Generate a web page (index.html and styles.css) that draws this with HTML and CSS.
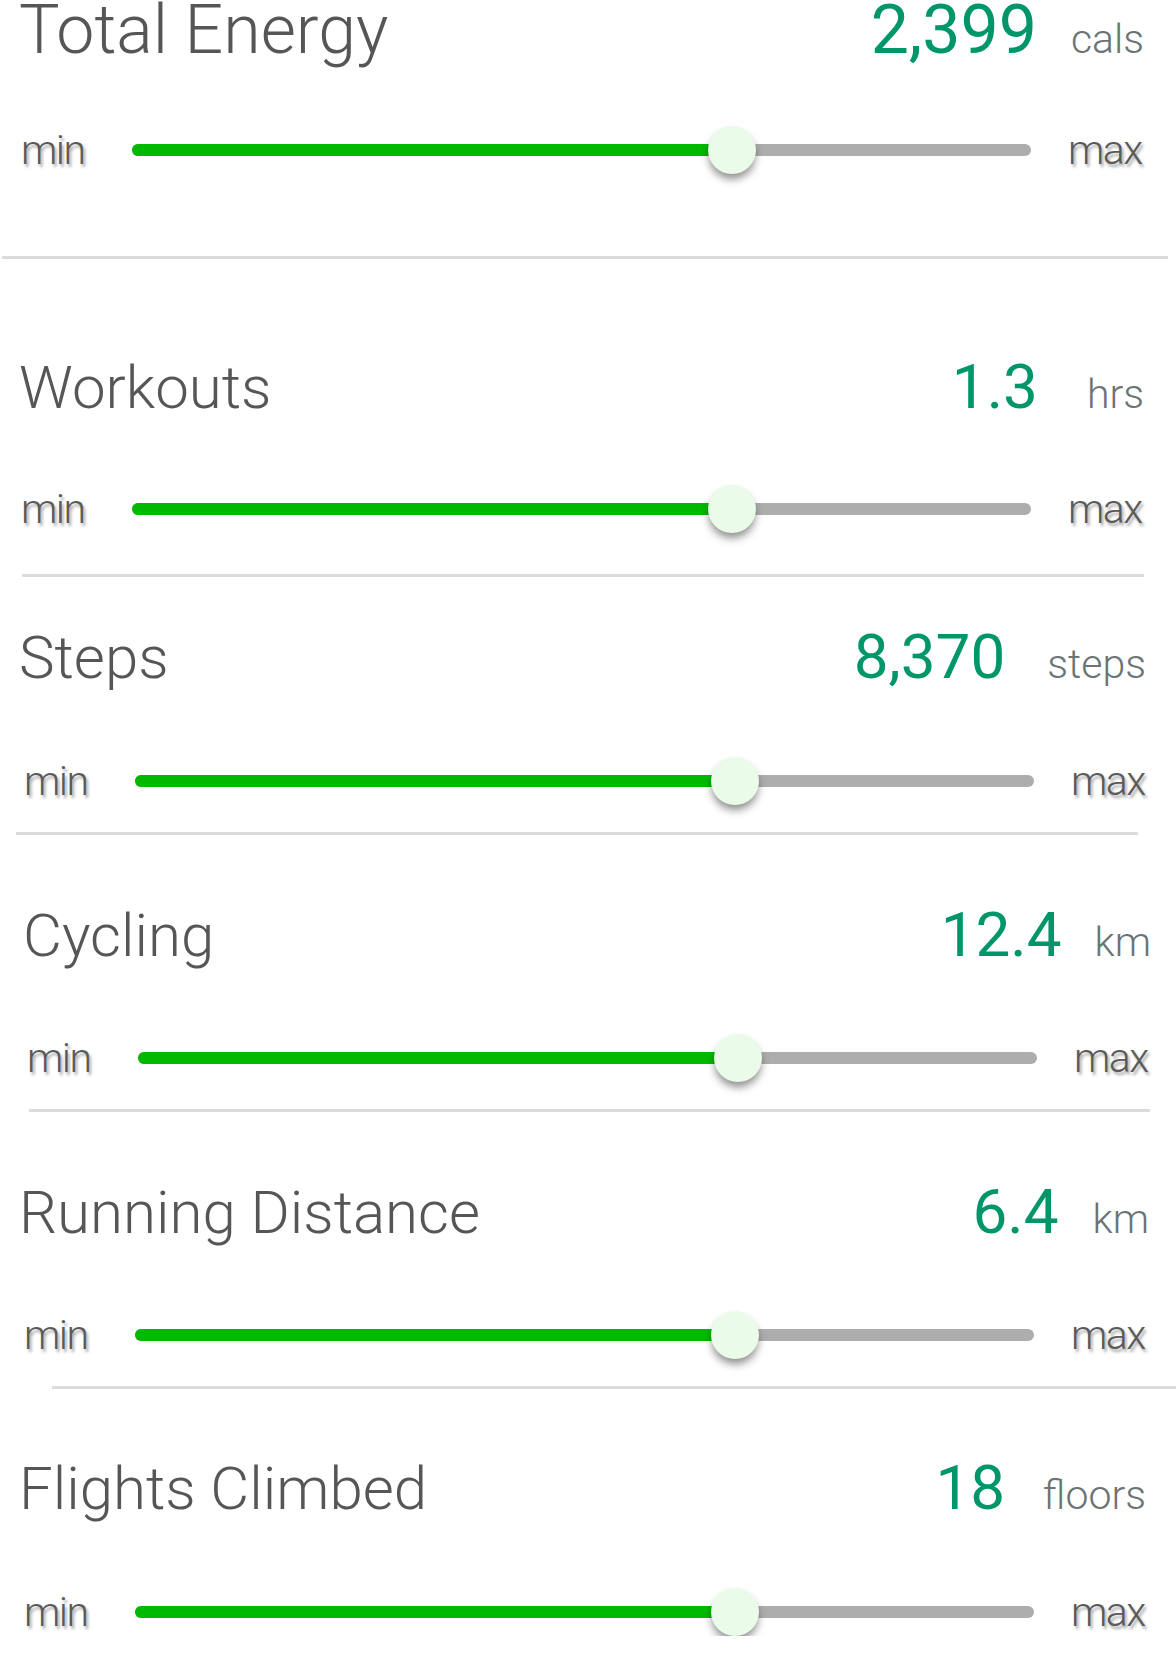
FILE: index.html
```html
<!DOCTYPE html>
<html lang="en">
<head>
<meta charset="utf-8">
<title>Activity Goals</title>
<link rel="stylesheet" href="styles.css">
</head>
<body>
<main class="goals">

  <section class="goal goal--energy">
    <div class="goal__head">
      <h2 class="goal__title">Total Energy</h2>
      <span class="goal__value">2,399</span>
      <span class="goal__unit">cals</span>
    </div>
    <div class="slider">
      <span class="slider__label">min</span>
      <div class="slider__track">
        <div class="slider__fill" style="width: 66.7%"></div>
        <div class="slider__thumb" style="left: 66.7%"></div>
      </div>
      <span class="slider__label slider__label--max">max</span>
    </div>
    <hr class="goal__rule">
  </section>

  <section class="goal goal--workouts">
    <div class="goal__head">
      <h2 class="goal__title">Workouts</h2>
      <span class="goal__value">1.3</span>
      <span class="goal__unit">hrs</span>
    </div>
    <div class="slider">
      <span class="slider__label">min</span>
      <div class="slider__track">
        <div class="slider__fill" style="width: 66.7%"></div>
        <div class="slider__thumb" style="left: 66.7%"></div>
      </div>
      <span class="slider__label slider__label--max">max</span>
    </div>
    <hr class="goal__rule">
  </section>

  <section class="goal goal--steps">
    <div class="goal__head">
      <h2 class="goal__title">Steps</h2>
      <span class="goal__value">8,370</span>
      <span class="goal__unit">steps</span>
    </div>
    <div class="slider">
      <span class="slider__label">min</span>
      <div class="slider__track">
        <div class="slider__fill" style="width: 66.7%"></div>
        <div class="slider__thumb" style="left: 66.7%"></div>
      </div>
      <span class="slider__label slider__label--max">max</span>
    </div>
    <hr class="goal__rule">
  </section>

  <section class="goal goal--cycling">
    <div class="goal__head">
      <h2 class="goal__title">Cycling</h2>
      <span class="goal__value">12.4</span>
      <span class="goal__unit">km</span>
    </div>
    <div class="slider">
      <span class="slider__label">min</span>
      <div class="slider__track">
        <div class="slider__fill" style="width: 66.7%"></div>
        <div class="slider__thumb" style="left: 66.7%"></div>
      </div>
      <span class="slider__label slider__label--max">max</span>
    </div>
    <hr class="goal__rule">
  </section>

  <section class="goal goal--running">
    <div class="goal__head">
      <h2 class="goal__title">Running Distance</h2>
      <span class="goal__value">6.4</span>
      <span class="goal__unit">km</span>
    </div>
    <div class="slider">
      <span class="slider__label">min</span>
      <div class="slider__track">
        <div class="slider__fill" style="width: 66.7%"></div>
        <div class="slider__thumb" style="left: 66.7%"></div>
      </div>
      <span class="slider__label slider__label--max">max</span>
    </div>
    <hr class="goal__rule">
  </section>

  <section class="goal goal--flights">
    <div class="goal__head">
      <h2 class="goal__title">Flights Climbed</h2>
      <span class="goal__value">18</span>
      <span class="goal__unit">floors</span>
    </div>
    <div class="slider">
      <span class="slider__label">min</span>
      <div class="slider__track">
        <div class="slider__fill" style="width: 66.7%"></div>
        <div class="slider__thumb" style="left: 66.7%"></div>
      </div>
      <span class="slider__label slider__label--max">max</span>
    </div>
  </section>

</main>
</body>
</html>
```
FILE: styles.css
```css
html, body {
  margin: 0;
  padding: 0;
  background: #ffffff;
}

body {
  font-family: "Roboto", "Liberation Sans", Arial, sans-serif;
  color: #555555;
  overflow-x: hidden;
}

.goals {
  width: 1176px;
}

/* ---------- one goal block ---------- */
.goal {
  --pad-top: 69px;
  --head-pl: 19px;
  --head-pr: 30px;
  --unit-gap: 35px;
  --slider-ml: 24px;
  --slider-mt: 68px;
  --rule-mt: 27px;
  --rule-ml: 16px;
  --rule-mr: 38px;
  padding-top: var(--pad-top);
}

.goal__head {
  display: flex;
  align-items: baseline;
  padding-left: var(--head-pl);
  padding-right: var(--head-pr);
}

.goal__title {
  flex: 1;
  margin: 0;
  font-size: 60px;
  font-weight: 300;
  line-height: 1;
  color: #565656;
  white-space: nowrap;
}

.goal__value {
  font-size: 62px;
  font-weight: 400;
  line-height: 1;
  color: #00966a;
  margin-right: var(--unit-gap);
}

.goal__unit {
  font-size: 41px;
  font-weight: 300;
  line-height: 1;
  color: #6a7474;
}

/* ---------- slider ---------- */
.slider {
  display: grid;
  grid-template-columns: 111px 1fr 145px;
  align-items: center;
  width: 1155px;
  height: 48px;
  margin-left: var(--slider-ml);
  margin-top: var(--slider-mt);
}

.slider__label {
  font-size: 41px;
  font-weight: 300;
  line-height: 1;
  color: #5a5a5a;
  letter-spacing: -1.5px;
  text-shadow: 2px 3px 3px rgba(0, 0, 0, 0.35);
}

.slider__label--max {
  padding-left: 37px;
}

.slider__track {
  position: relative;
  height: 12px;
  border-radius: 6px;
  background: #adadad;
}

.slider__fill {
  height: 100%;
  border-radius: 6px 0 0 6px;
  background: #00b900;
}

.slider__thumb {
  position: absolute;
  top: 50%;
  width: 48px;
  height: 48px;
  margin-left: -24px;
  margin-top: -24px;
  border-radius: 50%;
  background: #eafbea;
  box-shadow: 0 6px 8px -1px rgba(0, 0, 0, 0.45);
}

/* ---------- divider ---------- */
.goal__rule {
  height: 3px;
  margin: var(--rule-mt) var(--rule-mr) 0 var(--rule-ml);
  border: 0;
  background: #dcdcdc;
}

/* ---------- per-goal tweaks ---------- */
.goal--energy {
  --pad-top: 0px;
  --head-pl: 19px;
  --head-pr: 32px;
  --unit-gap: 34px;
  --slider-ml: 21px;
  --slider-mt: 62px;
  --rule-mt: 82px;
  --rule-ml: 2px;
  --rule-mr: 8px;
}

.goal--energy .goal__head {
  margin-top: -4px;
}

.goal--energy .goal__title {
  font-size: 68px;
}

.goal--energy .goal__value {
  font-size: 68px;
}

.goal--workouts {
  --pad-top: 97px;
  --head-pl: 19px;
  --head-pr: 32px;
  --unit-gap: 49px;
  --slider-ml: 21px;
  --slider-mt: 67px;
  --rule-mt: 41px;
  --rule-ml: 22px;
  --rule-mr: 32px;
}

.goal--steps {
  --pad-top: 49px;
  --head-pl: 19px;
  --head-pr: 30px;
  --unit-gap: 42px;
  --slider-mt: 69px;
  --rule-ml: 16px;
  --rule-mr: 38px;
}

.goal--cycling {
  --head-pl: 23px;
  --head-pr: 25px;
  --unit-gap: 33px;
  --slider-ml: 27px;
  --rule-ml: 29px;
  --rule-mr: 26px;
}

.goal--running {
  --head-pl: 19px;
  --head-pr: 27px;
  --unit-gap: 34px;
  --rule-ml: 52px;
  --rule-mr: 0px;
}

.goal--flights {
  --pad-top: 68px;
  --head-pl: 19px;
  --head-pr: 30px;
  --unit-gap: 38px;
  --slider-mt: 69px;
}
```
